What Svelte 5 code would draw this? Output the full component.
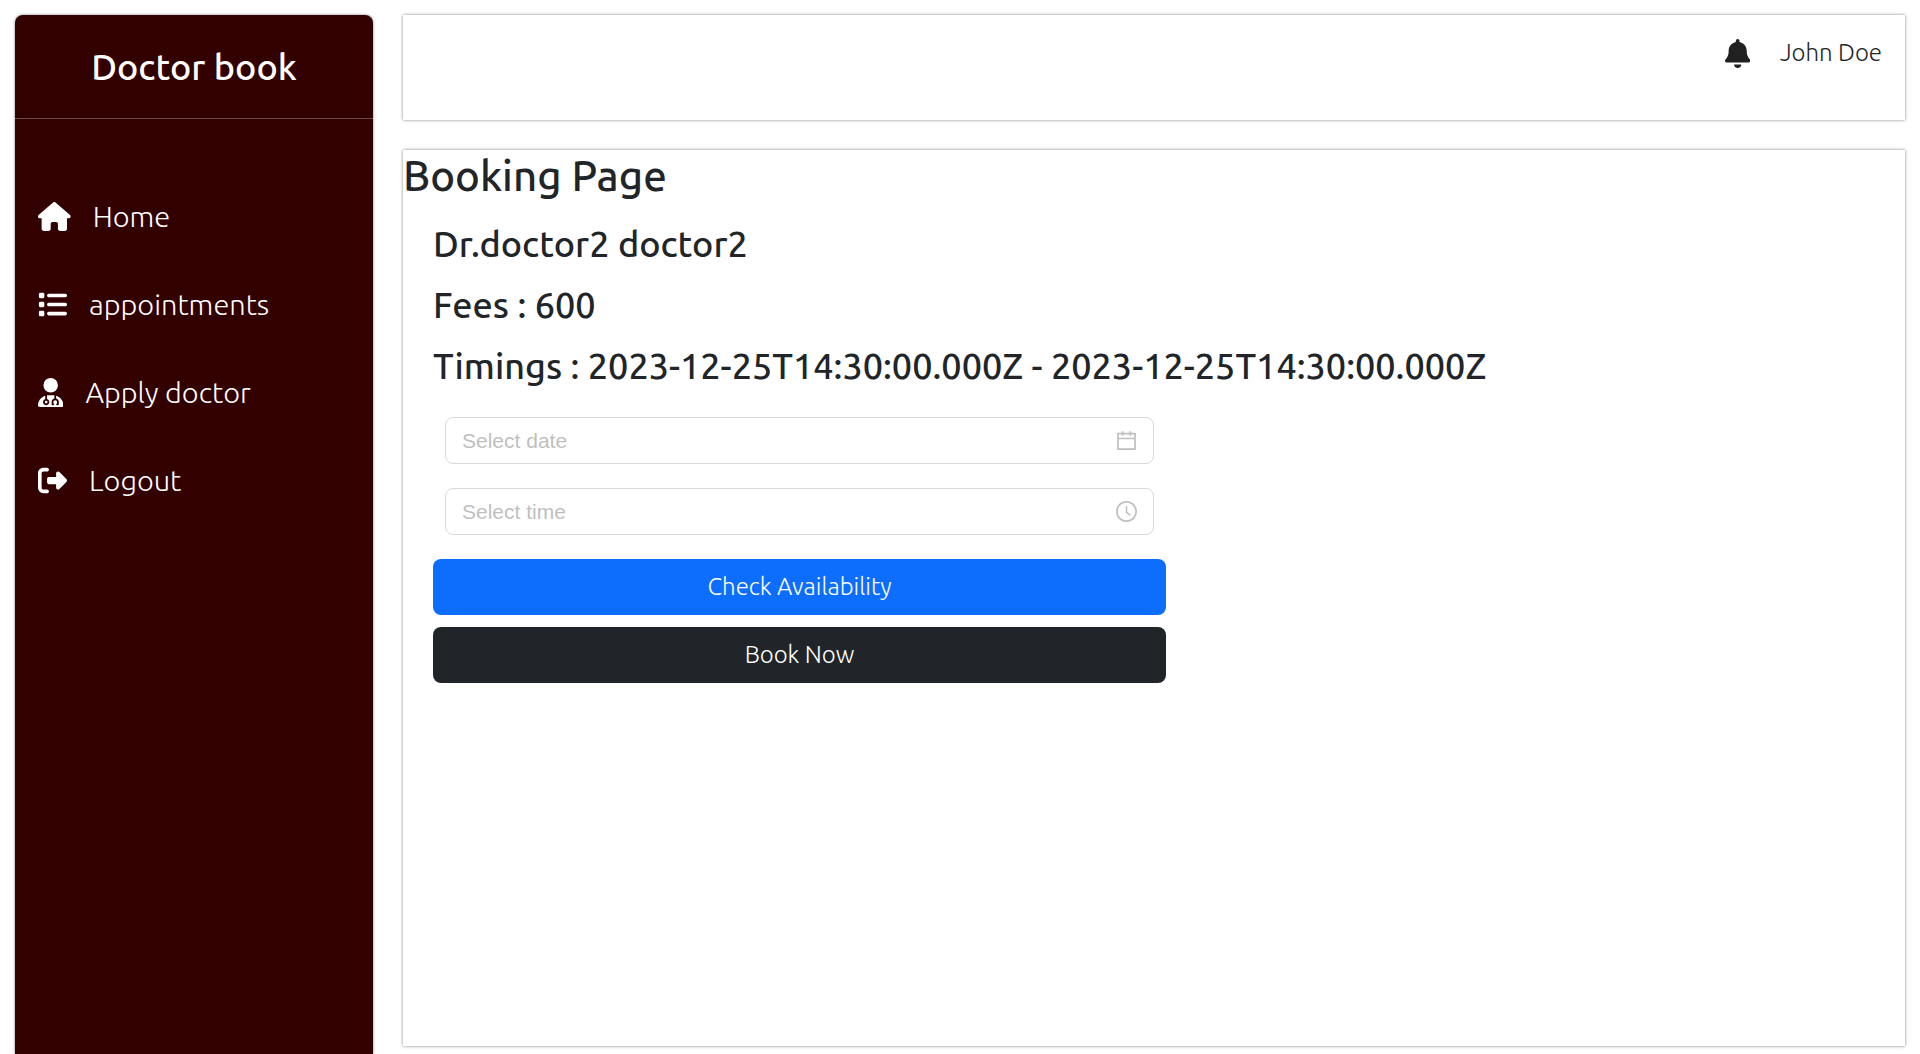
<script>
  const menu = [
    {
      label: 'Home',
      href: '#home',
      width: 576,
      path: 'M575.8 255.5c0 18-15 32.1-32 32.1h-32l.7 160.2c0 2.7-.2 5.4-.5 8.1V472c0 22.1-17.9 40-40 40H456c-1.1 0-2.2 0-3.3-.1c-1.4 .1-2.8 .1-4.2 .1H416 392c-22.1 0-40-17.9-40-40V448 384c0-17.7-14.3-32-32-32H256c-17.7 0-32 14.3-32 32v64 24c0 22.1-17.9 40-40 40H160 128.1c-1.5 0-3-.1-4.5-.2c-1.2 .1-2.4 .2-3.6 .2H104c-22.1 0-40-17.9-40-40V360c0-.9 0-1.9 .1-2.8V287.6H32c-18 0-32-14-32-32.1c0-9 3-17 10-24L266.4 8c7-7 15-8 22-8s15 2 21 7L564.8 231.5c8 7 12 15 11 24z',
    },
    {
      label: 'appointments',
      href: '#appointments',
      width: 512,
      path: 'M40 48C26.7 48 16 58.7 16 72v48c0 13.3 10.7 24 24 24H88c13.3 0 24-10.7 24-24V72c0-13.3-10.7-24-24-24H40zM192 64c-17.7 0-32 14.3-32 32s14.3 32 32 32H480c17.7 0 32-14.3 32-32s-14.3-32-32-32H192zm0 160c-17.7 0-32 14.3-32 32s14.3 32 32 32H480c17.7 0 32-14.3 32-32s-14.3-32-32-32H192zm0 160c-17.7 0-32 14.3-32 32s14.3 32 32 32H480c17.7 0 32-14.3 32-32s-14.3-32-32-32H192zM16 232v48c0 13.3 10.7 24 24 24H88c13.3 0 24-10.7 24-24V232c0-13.3-10.7-24-24-24H40c-13.3 0-24 10.7-24 24zM40 368c-13.3 0-24 10.7-24 24v48c0 13.3 10.7 24 24 24H88c13.3 0 24-10.7 24-24V392c0-13.3-10.7-24-24-24H40z',
    },
    {
      label: 'Apply doctor',
      href: '#apply-doctor',
      width: 448,
      path: 'M224 256A128 128 0 1 0 224 0a128 128 0 1 0 0 256zm-96 55.2C54 332.9 0 401.3 0 482.3C0 498.7 13.3 512 29.7 512H418.3c16.4 0 29.7-13.3 29.7-29.7c0-81-54-149.4-128-171.1V362c27.6 7.1 48 32.2 48 62v40c0 8.8-7.2 16-16 16H336c-8.8 0-16-7.2-16-16s7.2-16 16-16V424c0-17.7-14.3-32-32-32s-32 14.3-32 32v24c8.8 0 16 7.2 16 16s-7.2 16-16 16H256c-8.8 0-16-7.2-16-16V424c0-29.8 20.4-54.9 48-62V304.9c-6-.6-12.1-.9-18.3-.9H178.3c-6.2 0-12.3 .3-18.3 .9v65.4c23.1 6.9 40 28.3 40 53.7c0 30.9-25.1 56-56 56s-56-25.1-56-56c0-25.4 16.9-46.8 40-53.7V311.2zM144 448a24 24 0 1 0 0-48 24 24 0 1 0 0 48z',
    },
    {
      label: 'Logout',
      href: '#logout',
      width: 512,
      path: 'M377.9 105.9L500.7 228.7c7.2 7.2 11.3 17.1 11.3 27.3s-4.1 20.1-11.3 27.3L377.9 406.1c-6.4 6.4-15 9.9-24 9.9c-18.7 0-33.9-15.2-33.9-33.9l0-62.1-128 0c-17.7 0-32-14.3-32-32l0-64c0-17.7 14.3-32 32-32l128 0 0-62.1c0-18.7 15.2-33.9 33.9-33.9c9 0 17.6 3.6 24 9.9zM160 96L96 96c-17.7 0-32 14.3-32 32l0 256c0 17.7 14.3 32 32 32l64 0c17.7 0 32 14.3 32 32s-14.3 32-32 32l-64 0c-53 0-96-43-96-96L0 128C0 75 43 32 96 32l64 0c17.7 0 32 14.3 32 32s-14.3 32-32 32z',
    },
  ];

  let date = $state('');
  let time = $state('');
</script>

<div class="layout">
  <aside class="sidebar">
    <div class="logo"><h2>Doctor book</h2></div>
    <nav class="menu">
      {#each menu as item}
        <a href={item.href}>
          <svg class="icon" viewBox="0 0 {item.width} 512" aria-hidden="true"><path d={item.path} /></svg>
          <span>{item.label}</span>
        </a>
      {/each}
    </nav>
  </aside>

  <div class="content">
    <header class="header">
      <button class="bell" type="button" aria-label="Notifications">
        <svg class="icon" viewBox="0 0 448 512" aria-hidden="true"><path d="M224 0c-17.7 0-32 14.3-32 32V51.2C119 66 64 130.6 64 208v18.8c0 47-17.3 92.4-48.5 127.6l-7.4 8.3c-8.4 9.4-10.4 22.9-5.3 34.4S19.4 416 32 416H416c12.6 0 24-7.4 29.2-18.9s3.1-25-5.3-34.4l-7.4-8.3C401.3 319.2 384 273.9 384 226.8V208c0-77.4-55-142-128-156.8V32c0-17.7-14.3-32-32-32zm45.3 493.3c12-12 18.7-28.3 18.7-45.3H224 160c0 17 6.7 33.3 18.7 45.3s28.3 18.7 45.3 18.7s33.3-6.7 45.3-18.7z" /></svg>
      </button>
      <a class="profile" href="#profile">John Doe</a>
    </header>

    <main class="body">
      <h1>Booking Page</h1>
      <div class="booking">
        <h2>Dr.doctor2 doctor2</h2>
        <h2>Fees : 600</h2>
        <h2>Timings : 2023-12-25T14:30:00.000Z - 2023-12-25T14:30:00.000Z</h2>
        <form class="form">
          <label class="picker">
            <input type="text" placeholder="Select date" aria-label="Select date" bind:value={date} />
            <svg viewBox="64 64 896 896" aria-hidden="true"><path d="M880 184H712v-64c0-4.4-3.6-8-8-8h-56c-4.4 0-8 3.6-8 8v64H384v-64c0-4.4-3.6-8-8-8h-56c-4.4 0-8 3.6-8 8v64H144c-17.7 0-32 14.3-32 32v664c0 17.7 14.3 32 32 32h736c17.7 0 32-14.3 32-32V216c0-17.7-14.3-32-32-32zm-40 656H184V460h656v380zM184 392V256h128v48c0 4.4 3.6 8 8 8h56c4.4 0 8-3.6 8-8v-48h256v48c0 4.4 3.6 8 8 8h56c4.4 0 8-3.6 8-8v-48h128v136H184z" /></svg>
          </label>
          <label class="picker">
            <input type="text" placeholder="Select time" aria-label="Select time" bind:value={time} />
            <svg viewBox="64 64 896 896" aria-hidden="true"><path d="M512 64C264.6 64 64 264.6 64 512s200.6 448 448 448 448-200.6 448-448S759.4 64 512 64zm0 820c-205.4 0-372-166.6-372-372s166.6-372 372-372 372 166.6 372 372-166.6 372-372 372z" /><path d="M686.7 638.6L544.1 535.5V288c0-4.4-3.6-8-8-8H488c-4.4 0-8 3.6-8 8v275.4c0 2.6 1.2 5 3.3 6.5l165.4 120.6c3.6 2.6 8.6 1.8 11.2-1.7l28.6-39c2.6-3.7 1.8-8.7-1.8-11.2z" /></svg>
          </label>
          <button class="btn primary" type="button">Check Availability</button>
          <button class="btn dark" type="button">Book Now</button>
        </form>
      </div>
    </main>
  </div>
</div>

<style>
  :global(body) {
    margin: 0;
    background: #fff;
  }
  .layout,
  .layout :global(*) {
    box-sizing: border-box;
  }
  .layout {
    display: flex;
    gap: 30px;
    min-height: 100vh;
    padding: 15px 15px 0;
    color: #212529;
    font-family: Ubuntu, 'Open Sans', 'Noto Sans', sans-serif;
    font-weight: 300;
  }
  h1,
  h2 {
    margin: 0;
    font-weight: 500;
  }
  h1 {
    font-size: 42px;
    line-height: 52px;
  }
  h2 {
    font-size: 36px;
    line-height: 43px;
  }
  .sidebar {
    flex: 0 0 19%;
    max-width: 358px;
    border-radius: 8px 8px 0 0;
    background: #300;
    color: #fff;
    box-shadow: 0 0 3px gray;
  }
  .logo {
    display: flex;
    justify-content: center;
    padding: 30px 0;
    border-bottom: 1px solid #6f4c4c;
  }
  .menu {
    display: flex;
    flex-direction: column;
    gap: 44px;
    padding: 75px 23px;
  }
  .menu a {
    display: flex;
    align-items: center;
    gap: 22px;
    color: inherit;
    font-size: 29px;
    line-height: 44px;
    text-decoration: none;
  }
  .icon {
    display: block;
    height: 29px;
    fill: currentColor;
  }
  .content {
    display: flex;
    flex: 1;
    flex-direction: column;
    gap: 30px;
    min-width: 0;
  }
  .header {
    display: flex;
    justify-content: flex-end;
    align-items: flex-start;
    gap: 30px;
    min-height: 10vh;
    padding: 20px 23px;
    background: #fff;
    box-shadow: 0 0 3px gray;
  }
  .bell {
    margin: 4px 0 0;
    padding: 0;
    border: 0;
    background: none;
    color: #212121;
  }
  .profile {
    color: inherit;
    font-size: 24px;
    line-height: 36px;
    text-decoration: none;
  }
  .body {
    min-height: 85vh;
    background: #fff;
    box-shadow: 0 0 3px gray;
  }
  .booking {
    display: flex;
    flex-direction: column;
    gap: 18px;
    padding: 20px 6px 30px 30px;
  }
  .form {
    display: flex;
    flex-direction: column;
    gap: 12px;
    width: 50%;
    padding-top: 12px;
  }
  .picker {
    display: flex;
    align-items: center;
    gap: 8px;
    margin: 0 12px 12px;
    padding: 10px 16px;
    border: 1px solid #d9d9d9;
    border-radius: 8px;
    background: #fff;
  }
  .picker input {
    flex: 1;
    min-width: 0;
    height: 25px;
    padding: 0;
    border: 0;
    outline: 0;
    background: none;
    color: #212529;
    font: 21px 'Liberation Sans', sans-serif;
  }
  .picker input::placeholder {
    color: #bfbfbf;
    opacity: 1;
  }
  .picker svg {
    width: 21px;
    height: 21px;
    fill: #bfbfbf;
  }
  .btn {
    padding: 10px 12px;
    border: 0;
    border-radius: 8px;
    color: #fff;
    font: inherit;
    font-size: 24px;
    line-height: 36px;
  }
  .primary {
    background: #0d6efd;
  }
  .dark {
    background: #212529;
  }
</style>
